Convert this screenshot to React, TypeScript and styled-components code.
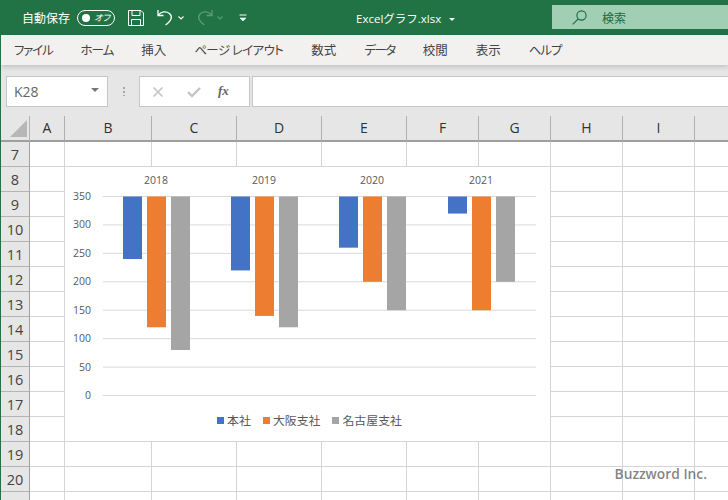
import React from "react";
import styled, { createGlobalStyle } from "styled-components";

const UI_FONT = `"Open Sans", "Noto Sans CJK JP", sans-serif`;
const JP_FONT = `"Noto Sans CJK JP", "Open Sans", sans-serif`;

const GlobalStyle = createGlobalStyle`
  html, body {
    margin: 0;
    padding: 0;
    background: #fff;
    overflow: hidden;
  }
`;

const Page = styled.div`
  width: 728px;
  height: 500px;
  overflow: hidden;
  display: flex;
  flex-direction: column;
  font-family: ${UI_FONT};
  box-sizing: border-box;
  border-left: 1px solid #217346;
`;

const TitleBar = styled.div`
  height: 35px;
  flex: none;
  background: #217346;
  display: flex;
  align-items: center;
  color: #fff;
  margin-left: -1px;
  padding-left: 22px;
`;

const AutoSave = styled.span`
  font-family: ${JP_FONT};
  font-size: 12px;
  line-height: 16px;
  margin-top: 1px;
`;

const Toggle = styled.div`
  box-sizing: border-box;
  width: 38px;
  height: 16px;
  margin-left: 7px;
  margin-top: 1px;
  border: 1px solid #fff;
  border-radius: 8px;
  display: flex;
  align-items: center;
  justify-content: space-between;
  padding: 0 4px 0 4px;
`;

const ToggleDot = styled.span`
  width: 8px;
  height: 8px;
  border-radius: 50%;
  background: #fff;
`;

const ToggleText = styled.span`
  font-family: ${JP_FONT};
  font-feature-settings: "palt";
  font-size: 9px;
  line-height: 12px;
  font-style: italic;
`;

const QuickIcon = styled.svg<{ $left: number }>`
  flex: none;
  margin-left: ${(p) => p.$left}px;
  display: block;
`;

const FileName = styled.div`
  margin-left: 109px;
  width: 96px;
  display: flex;
  align-items: center;
  gap: 8px;
  font-family: ${UI_FONT};
  font-size: 11.5px;
  white-space: nowrap;
  margin-top: 1px;
`;

const SmallCaret = styled.span`
  width: 0;
  height: 0;
  border-left: 3px solid transparent;
  border-right: 3px solid transparent;
  border-top: 3px solid #fff;
  margin-top: 2px;
`;

const SearchBox = styled.div`
  margin-left: auto;
  width: 176px;
  height: 24px;
  margin-top: -1px;
  background: #a0cfb3;
  color: #1c6a40;
  display: flex;
  align-items: center;
  padding-left: 20px;
  gap: 15px;
  box-sizing: border-box;
  font-family: ${JP_FONT};
  font-size: 12px;
`;

const Ribbon = styled.nav`
  position: relative;
  z-index: 2;
  height: 30px;
  flex: none;
  background: #f3f1f0;
  box-shadow: 0 2px 5px rgba(0, 0, 0, 0.16);
  display: flex;
  align-items: center;
  padding-left: 13px;
  gap: 28px;
  color: #444;
`;

const RibbonTab = styled.span<{ $track: number }>`
  font-family: ${JP_FONT};
  font-feature-settings: "palt";
  font-size: 12.5px;
  line-height: 16px;
  letter-spacing: ${(p) => p.$track}px;
  white-space: pre;
`;

const FormulaBar = styled.div`
  height: 51px;
  flex: none;
  box-sizing: border-box;
  background: #e6e6e6;
  display: flex;
  align-items: flex-start;
  padding: 11px 0 0 5px;
`;

const Field = styled.div`
  box-sizing: border-box;
  height: 31px;
  background: #fff;
  border: 1px solid #c6c6c6;
  display: flex;
  align-items: center;
`;

const NameBox = styled(Field)`
  width: 102px;
  padding: 0 8px 0 7px;
  justify-content: space-between;
  font-size: 14px;
  color: #666;
`;

const NameCaret = styled.span`
  width: 0;
  height: 0;
  border-left: 4px solid transparent;
  border-right: 4px solid transparent;
  border-top: 4px solid #777;
  margin-top: -3px;
`;

const Grip = styled.div`
  width: 2px;
  height: 10px;
  margin: 10px 14px 0 15px;
  background-image: radial-gradient(circle, #a6a6a6 1px, transparent 1.2px);
  background-size: 2px 4px;
`;

const FormulaButtons = styled(Field)`
  width: 111px;
  padding-left: 12px;
`;

const CheckIcon = styled.svg`
  margin-left: 23px;
`;

const FxLabel = styled.span`
  font-family: "Liberation Serif", serif;
  font-style: italic;
  font-weight: 700;
  font-size: 13px;
  color: #666;
  margin-left: 17px;
  margin-top: -2px;
`;

const FormulaInput = styled(Field)`
  flex: 1;
  margin-left: 2px;
  border-right: none;
`;

const Sheet = styled.div`
  position: relative;
  flex: 1;
  min-height: 0;
  display: grid;
  grid-template-columns: 29px 35px 87px 85px 85px 85px 72px 72px 72px 72px 34px;
  grid-auto-rows: 25px;
  grid-template-rows: 26px;
  align-content: start;
  background: #fff;
`;

const Corner = styled.div`
  box-sizing: border-box;
  background: #e6e6e6;
  border-bottom: 2px solid #9f9f9f;
  border-right: 1px solid #b4b4b4;
  display: flex;
  align-items: flex-end;
  justify-content: flex-end;
  padding: 0 2px 3px 0;
`;

const ColumnHeader = styled.div`
  box-sizing: border-box;
  background: #e6e6e6;
  border-bottom: 2px solid #9f9f9f;
  border-right: 1px solid #b0b0b0;
  display: flex;
  align-items: center;
  justify-content: center;
  font-size: 14px;
  line-height: 16px;
  color: #333;
`;

const RowHeader = styled.div`
  box-sizing: border-box;
  background: #e6e6e6;
  border-right: 1px solid #9f9f9f;
  border-bottom: 1px solid #b4b4b4;
  display: flex;
  align-items: center;
  justify-content: center;
  font-size: 14.5px;
  color: #444;
`;

const Cell = styled.div`
  box-sizing: border-box;
  border-right: 1px solid #d4d4d4;
  border-bottom: 1px solid #d4d4d4;
`;

const ChartPanel = styled.div`
  position: absolute;
  left: 64px;
  top: 51px;
  width: 485px;
  height: 274px;
  background: #fff;
  display: flex;
  flex-direction: column;
`;

const ChartSvg = styled.svg`
  display: block;
  flex: none;
`;

const Legend = styled.div`
  display: flex;
  justify-content: center;
  align-items: center;
  gap: 12px;
  margin-top: 9px;
  padding-left: 4px;
  font-family: ${JP_FONT};
  font-size: 11.9px;
  line-height: 16px;
  color: #595959;
`;

const LegendItem = styled.span`
  display: flex;
  align-items: center;
  gap: 3px;
  white-space: nowrap;
`;

const Swatch = styled.i<{ $color: string }>`
  width: 7px;
  height: 7px;
  background: ${(p) => p.$color};
`;

const Watermark = styled.div`
  position: absolute;
  right: 21px;
  bottom: 17px;
  font-size: 13.8px;
  font-weight: 600;
  color: rgba(90, 90, 90, 0.75);
  white-space: nowrap;
`;

const TABS = [
  { label: "ファイル", track: -1.2 },
  { label: "ホーム", track: -1 },
  { label: "挿入", track: 0 },
  { label: "ページ レイアウト", track: -0.6 },
  { label: "数式", track: 0 },
  { label: "データ", track: -1.5 },
  { label: "校閲", track: 0 },
  { label: "表示", track: 0 },
  { label: "ヘルプ", track: -1 },
];
const COLUMNS = ["A", "B", "C", "D", "E", "F", "G", "H", "I", ""];
const ROWS = [7, 8, 9, 10, 11, 12, 13, 14, 15, 16, 17, 18, 19, 20, 21];
const TICKS = [350, 300, 250, 200, 150, 100, 50, 0];

const SERIES = [
  { name: "本社", color: "#4472c4" },
  { name: "大阪支社", color: "#ed7d31" },
  { name: "名古屋支社", color: "#a5a5a5" },
];

const YEARS = [
  { label: "2018", center: 156, left: 123, values: [240, 120, 80] },
  { label: "2019", center: 264, left: 231, values: [220, 140, 120] },
  { label: "2020", center: 372, left: 339, values: [260, 200, 150] },
  { label: "2021", center: 481, left: 448, values: [320, 150, 200] },
];

const yFor = (v: number) => 395.5 - (v / 350) * 199;

const Chart = () => (
  <ChartPanel>
    <ChartSvg width="485" height="236" viewBox="65 167 485 236">
      {TICKS.map((t) => (
        <g key={t}>
          <line x1="103" x2="536" y1={yFor(t)} y2={yFor(t)} stroke="#d9d9d9" strokeWidth="1" />
          <text
            x="91"
            y={yFor(t) + 3.5}
            textAnchor="end"
            fontFamily={UI_FONT}
            fontSize="10.5"
            fill="#595959"
          >
            {t}
          </text>
        </g>
      ))}
      {YEARS.map((year) => (
        <g key={year.label}>
          <text
            x={year.center}
            y="184"
            textAnchor="middle"
            fontFamily={UI_FONT}
            fontSize="10.5"
            fill="#595959"
          >
            {year.label}
          </text>
          {year.values.map((v, i) => (
            <rect
              key={i}
              x={year.left + i * 24}
              y={yFor(350)}
              width="19"
              height={yFor(v) - yFor(350)}
              fill={SERIES[i].color}
            />
          ))}
        </g>
      ))}
    </ChartSvg>
    <Legend>
      {SERIES.map((s) => (
        <LegendItem key={s.name}>
          <Swatch $color={s.color} />
          {s.name}
        </LegendItem>
      ))}
    </Legend>
  </ChartPanel>
);

const TinyChevron = ({ left, color = "#fff" }: { left: number; color?: string }) => (
  <QuickIcon $left={left} width="6" height="4" viewBox="0 0 6 4" fill="none">
    <path d="M0.5 0.5 L3 3 L5.5 0.5" stroke={color} strokeWidth="1.2" />
  </QuickIcon>
);

const App = () => (
  <Page>
    <GlobalStyle />
    <TitleBar>
      <AutoSave>自動保存</AutoSave>
      <Toggle>
        <ToggleDot />
        <ToggleText>オフ</ToggleText>
      </Toggle>
      <QuickIcon $left={13} width="16" height="16" viewBox="0 0 16 16" fill="none" stroke="#fff" strokeWidth="1">
        <path d="M0.5 0.5 H13 L15.5 3 V15.5 H0.5 Z" />
        <path d="M4 0.5 V5.5 H12 V0.5" />
        <path d="M3.5 15.5 V9.5 H12.5 V15.5" />
      </QuickIcon>
      <QuickIcon $left={13} width="16" height="17" viewBox="0 0 16 17" fill="none" stroke="#fff" strokeWidth="1.3">
        <path d="M1 1 V6.5 H6.5" />
        <path d="M1.2 6.2 C4 2.6 9 1.8 12.4 4.4 C15.6 7 15.2 11.4 8.6 16" />
      </QuickIcon>
      <TinyChevron left={5} />
      <QuickIcon $left={13} width="16" height="17" viewBox="0 0 16 17" fill="none" stroke="#5c9b78" strokeWidth="1.3">
        <path d="M15 1 V6.5 H9.5" />
        <path d="M14.8 6.2 C12 2.6 7 1.8 3.6 4.4 C0.4 7 0.8 11.4 7.4 16" />
      </QuickIcon>
      <TinyChevron left={4} color="#5c9b78" />
      <QuickIcon $left={16} width="8" height="8" viewBox="0 0 8 8" fill="none" stroke="#fff">
        <path d="M0.5 1 H7.5" />
        <path d="M1 4 L4 7 L7 4 Z" fill="#fff" strokeWidth="0.6" />
      </QuickIcon>
      <FileName>
        Excelグラフ.xlsx
        <SmallCaret />
      </FileName>
      <SearchBox>
        <svg width="15" height="15" viewBox="0 0 15 15" fill="none" stroke="#1c6a40" strokeWidth="1.1">
          <circle cx="9.5" cy="5.5" r="4.6" />
          <path d="M6.2 8.8 L0.8 14.4" />
        </svg>
        検索
      </SearchBox>
    </TitleBar>
    <Ribbon>
      {TABS.map((tab) => (
        <RibbonTab key={tab.label} $track={tab.track}>
          {tab.label}
        </RibbonTab>
      ))}
    </Ribbon>
    <FormulaBar>
      <NameBox>
        K28
        <NameCaret />
      </NameBox>
      <Grip />
      <FormulaButtons>
        <svg width="12" height="12" viewBox="0 0 12 12" fill="none" stroke="#c4c4c4" strokeWidth="1.6">
          <path d="M1.5 1.5 L10.5 10.5 M10.5 1.5 L1.5 10.5" />
        </svg>
        <CheckIcon width="14" height="12" viewBox="0 0 14 12" fill="none" stroke="#c4c4c4" strokeWidth="2.4">
          <path d="M1 6 L5 10 L13 2" />
        </CheckIcon>
        <FxLabel>fx</FxLabel>
      </FormulaButtons>
      <FormulaInput />
    </FormulaBar>
    <Sheet>
      <Corner>
        <svg width="17" height="17" viewBox="0 0 17 17">
          <path d="M17 0 V17 H0 Z" fill="#b7b7b7" />
        </svg>
      </Corner>
      {COLUMNS.map((c, i) => (
        <ColumnHeader key={i}>{c}</ColumnHeader>
      ))}
      {ROWS.map((r) => (
        <React.Fragment key={r}>
          <RowHeader>{r}</RowHeader>
          {COLUMNS.map((c, i) => (
            <Cell key={i} />
          ))}
        </React.Fragment>
      ))}
      <Chart />
      <Watermark>Buzzword Inc.</Watermark>
    </Sheet>
  </Page>
);

export default App;
